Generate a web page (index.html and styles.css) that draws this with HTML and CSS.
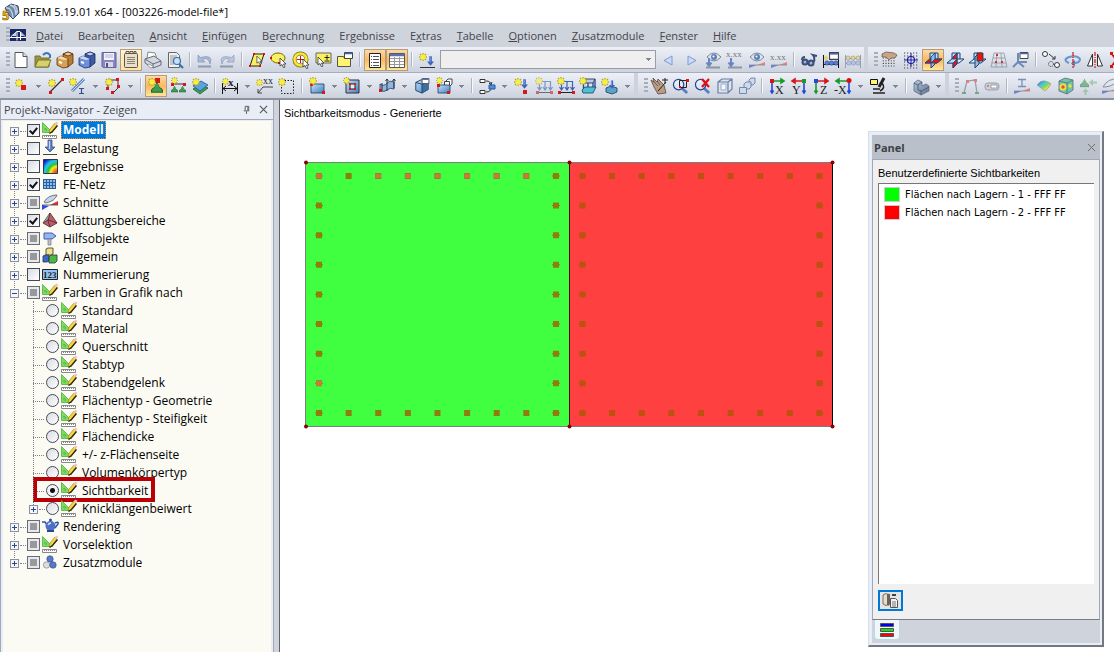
FILE: index.html
```html
<!DOCTYPE html>
<html lang="de">
<head>
    <meta charset="UTF-8">
    <meta name="viewport" content="width=device-width, initial-scale=1.0">
    <title>RFEM 5.19.01 x64 - [003226-model-file*]</title>
    <link rel="stylesheet" href="styles.css">
</head>
<body>
    <svg class="sprite" aria-hidden="true">
        <defs>
            <linearGradient id="g-blue" x1="0" y1="0" x2="1" y2="1"><stop offset="0" stop-color="#c4e2fa"/><stop offset="1" stop-color="#3f7fc0"/></linearGradient>
            <linearGradient id="g-steel" x1="0" y1="0" x2="1" y2="1"><stop offset="0" stop-color="#b9cbdc"/><stop offset="1" stop-color="#5c7088"/></linearGradient>
            <linearGradient id="g-rain" x1="0" y1="0" x2="1" y2="1"><stop offset="0" stop-color="#4058d8"/><stop offset=".35" stop-color="#40c8e0"/><stop offset=".55" stop-color="#80d860"/><stop offset=".75" stop-color="#f0e040"/><stop offset="1" stop-color="#e05040"/></linearGradient>
            <radialGradient id="g-res" cx="1" cy="1" r="1.25"><stop offset="0" stop-color="#e02010"/><stop offset=".25" stop-color="#f09010"/><stop offset=".4" stop-color="#f8f020"/><stop offset=".55" stop-color="#30c030"/><stop offset=".75" stop-color="#20c8f0"/><stop offset="1" stop-color="#1020c8"/></radialGradient>
        </defs>
        <!-- shared parts -->
        <symbol id="star" viewBox="0 0 8 8"><path d="M4 0v8M0 4h8M1 1l6 6M7 1L1 7" stroke="#b8a820" stroke-width="1.400"/><path d="M4 1v6M1 4h6M2 2l4 4M6 2L2 6" stroke="#f8f040" stroke-width="1.300"/></symbol>
        <symbol id="cursor" viewBox="0 0 8 10"><path d="M1 0l6 6H4.500l1.500 3-1.500.800L3 6.500 1 8z" fill="#fff" stroke="#333" stroke-width=".8"/></symbol>
        <symbol id="wedge" viewBox="0 0 18 6"><path d="M1 3v3l8-3z" fill="#6a80dc"/><path d="M9 3l8-3v3z" fill="#e88080"/><path d="M1 3h16" stroke="#888" stroke-width=".8"/></symbol>
        <symbol id="eye" viewBox="0 0 14 10"><path d="M0 5q7-8 14 0-7 8-14 0z" fill="#dfe6f0" stroke="#7b8695"/><circle cx="7" cy="5" r="3" fill="#5d82b8"/><circle cx="6.500" cy="4.500" r="1" fill="#fff"/></symbol>
        <symbol id="lens" viewBox="0 0 18 18"><path d="M11 11l5 5" stroke="#5a7fc4" stroke-width="3"/><circle cx="7" cy="7" r="5.500" fill="#dce9fb" stroke="#2f448c" stroke-width="1.300"/><path d="M4 6q1-3 4-3" stroke="#fff" fill="none"/></symbol>
        <symbol id="win" viewBox="0 0 9 7"><path d="M.5.5h8v6h-8z" fill="#fff" stroke="#444"/><path d="M1 1.500h7" stroke="#4c63a8" stroke-width="1.500"/></symbol>
        <symbol id="darrow" viewBox="0 0 8 11"><path d="M2.500 0h3v6H8l-4 5-4-5h2.500z" fill="#3c5fc0"/><path d="M3.500 0v7" stroke="#9bb4ec"/></symbol>
        <symbol id="support" viewBox="0 0 10 9"><path d="M0 8q0-3 3-4 2-1 2-4 0 3 2 4 3 1 3 4z" fill="#3f9c50" stroke="#1d5c2c" stroke-width=".8"/><circle cx="5" cy="3" r="2" fill="#3f9c50"/></symbol>
        <symbol id="plane" viewBox="0 0 20 20"><path d="M7 3h8v8H7z" fill="#bcdcf6" stroke="#16477e"/><path d="M2 13l5-4h12l-5 4z" fill="#dcecfa" stroke="#16477e"/><path d="M8 7l4-4v11l-4 4z" fill="#8fbce4" stroke="#16477e"/></symbol>
        <symbol id="dots" viewBox="0 0 18 12"><path d="M2 1h15M2 4h15M2 7h15M2 10h15" stroke="#444" stroke-width="1.200" stroke-dasharray="1.200 1.800"/></symbol>
        <symbol id="box" viewBox="0 0 18 18"><path d="M2 5l6-3 8 2v9l-7 4-7-3z" fill="url(#g-blue)" stroke="#1e3a5c"/><path d="M9 7l7-3v9l-7 4z" fill="#3d6ea4"/><path d="M2 5l7 2v10M9 7l7-3" fill="none" stroke="#1e3a5c"/></symbol>
        <!-- application -->
        <symbol id="i-app" viewBox="0 0 18 18"><path d="M3 5l6-4 7 2 1 7-6 6-4-4z" fill="#6f8aa8" stroke="#33475f"/><path d="M4 5q6-1 7 10M8 2q6 1 6 10M12 2q4 3 3 8" fill="none" stroke="#c5d5e6" stroke-width="1.300"/><text x="0" y="17" font-size="13" font-weight="bold" fill="#f7c52c" stroke="#7a5200" stroke-width=".6">5</text></symbol>
        <symbol id="i-bridge" viewBox="0 0 16 12"><path d="M0 0h16v12H0z" fill="#1b2a66"/><path d="M0 8.500h16M1 7.500l6-5v9M7 2.500h3l5 5M10.500 3v8" fill="none" stroke="#fff"/><path d="M2 7l4-4v4zM11 4l3 3h-3z" fill="#c8cfe4"/></symbol>
        <!-- standard toolbar -->
        <symbol id="i-new" viewBox="0 0 20 20"><path d="M4 2.500h8l4 4v11H4z" fill="#fff" stroke="#555"/><path d="M12 2.500v4h4" fill="#dde3ec" stroke="#555"/></symbol>
        <symbol id="i-open" viewBox="0 0 20 20"><path d="M2 17V6h5l1 2h8v9z" fill="#9a9540" stroke="#77742c"/><path d="M2 17l3-7h13l-3 7z" fill="#d8d070" stroke="#77742c"/><path d="M10 5q4-4 7 0v3" fill="none" stroke="#3e76b4" stroke-width="2"/></symbol>
        <symbol id="i-cab" viewBox="0 0 20 20"><path d="M8 4l5-2 5 2v9l-5 4-5-2z" fill="#b87c34" stroke="#50300c" stroke-width=".8"/><path d="M8 4l5 2 5-2-5-2z" fill="#f0cf94" stroke="#50300c" stroke-width=".8"/><path d="M2 8l4-2 7 3v8l-5 1-6-3z" fill="#d99f52" stroke="#50300c" stroke-width=".8"/><path d="M2 8l4-2 7 3-4 1z" fill="#f4dbaa"/><path d="M4 12l3 1" stroke="#fff" stroke-width="2"/></symbol>
        <symbol id="i-cabblue" viewBox="0 0 20 20"><path d="M8 4l5-2 5 2v9l-5 4-5-2z" fill="#3d5ba4" stroke="#182b5c" stroke-width=".8"/><path d="M8 4l5 2 5-2-5-2z" fill="#bccff4" stroke="#182b5c" stroke-width=".8"/><path d="M2 8l4-2 7 3v8l-5 1-6-3z" fill="#6c90dc" stroke="#182b5c" stroke-width=".8"/><path d="M2 8l4-2 7 3-4 1z" fill="#c8d8f8"/><path d="M4 12l3 1" stroke="#fff" stroke-width="2"/></symbol>
        <symbol id="i-save" viewBox="0 0 20 20"><path d="M3 2.500h14v15H4l-1-1z" fill="#8a86c4" stroke="#65629c"/><path d="M5 3h10v7H5z" fill="#f2f2fa"/><path d="M6 5h8M6 7h8" stroke="#b4b4cc"/><path d="M6 12h8v5H6z" fill="#d8d8e4"/><path d="M7 13h2v4H7z" fill="#54507c"/></symbol>
        <symbol id="i-note" viewBox="0 0 20 20"><rect x="3.500" y="3.500" width="13" height="14" rx="1" fill="#e9dfcb" stroke="#5d5547"/><path d="M6 7.500h8M6 9.500h8M6 11.500h8M6 13.500h8" stroke="#8b8170"/><path d="M5 4V1.500h3V4M9 4V1.500h3V4M13 4V1.500h2V4" fill="none" stroke="#5d5547"/></symbol>
        <symbol id="i-print" viewBox="0 0 20 20"><path d="M4 9l1-7 7 1 2 6z" fill="#fff" stroke="#888"/><path d="M2 9l9-3 7 5v4l-8 3-8-5z" fill="#d4d7e0" stroke="#656b7b"/><path d="M2 9l8 5 8-3M10 14v4" fill="none" stroke="#656b7b"/><path d="M6 14l5 3-3 1-4-3z" fill="#fff" stroke="#777" stroke-width=".7"/></symbol>
        <symbol id="i-preview" viewBox="0 0 20 20"><path d="M3.500 2.500h8l3 3v12h-11z" fill="#eef0f4" stroke="#666"/><path d="M5 6h7M5 8h7M5 10h5M5 12h4M5 14h4" stroke="#999"/><path d="M14 14l4 4" stroke="#3d6fa8" stroke-width="2.200"/><circle cx="12" cy="11" r="3.500" fill="#c4e0f8" stroke="#3d6fa8" stroke-width="1.200"/></symbol>
        <symbol id="i-undo" viewBox="0 0 20 20"><path d="M3 5v7h7L7.500 9.500Q13 6 15 14q4-10-9.500-6.500z" fill="#a9bad6" stroke="#8c9cbb" stroke-width=".8"/><path d="M3 16.500h13" stroke="#8c98ae" stroke-width="2"/></symbol>
        <symbol id="i-redo" viewBox="0 0 20 20"><path d="M17 5v7h-7l2.500-2.500Q7 6 5 14 1 4 14.500 7.500z" fill="#b9c6dc" stroke="#95a3be" stroke-width=".8"/><path d="M3 16.500h13" stroke="#8c98ae" stroke-width="2"/></symbol>
        <symbol id="i-sel" viewBox="0 0 20 20"><path d="M7 4h10l-4 12H3z" fill="#f8f060" stroke="#222"/><path d="M6 3h2v2H6zM16 3h2v2h-2zM2 15h2v2H2zM12 15h2v2h-2z" fill="#e01010"/><use href="#cursor" x="9" y="6" width="7" height="9"/></symbol>
        <symbol id="i-lasso" viewBox="0 0 20 20"><ellipse cx="9" cy="8" rx="7" ry="5" fill="#f8f060" stroke="#7a6a00"/><path d="M1 7h2v2H1zM9 12h2v2H9z" fill="#e01010"/><use href="#cursor" x="10" y="8" width="8" height="10"/></symbol>
        <symbol id="i-ring" viewBox="0 0 20 20"><circle cx="9.500" cy="9.500" r="6" fill="#fff" stroke="#7a6a00" stroke-width="4"/><circle cx="9.500" cy="9.500" r="6" fill="none" stroke="#f6e53a" stroke-width="2.600"/><path d="M9.500 6v7M6 9.500h7" stroke="#d01010"/><use href="#cursor" x="11" y="9" width="8" height="10"/></symbol>
        <symbol id="i-plus" viewBox="0 0 20 20"><path d="M3 3h15v10H3z" fill="#f8f060" stroke="#666"/><path d="M14 5v5M11.500 7.500h5M11.500 11h5" stroke="#222"/><use href="#cursor" x="4" y="7" width="8" height="10"/></symbol>
        <symbol id="i-folderwin" viewBox="0 0 20 20"><path d="M2.500 6.500h6l1 2h6v8h-13z" fill="#fff46c" stroke="#555"/><use href="#win" x="9" y="2" width="9" height="7"/></symbol>
        <symbol id="i-list" viewBox="0 0 20 20"><path d="M4.500 3.500h11v14h-11z" fill="#fff" stroke="#222"/><path d="M6 6.500h1M6 9.500h1M6 12.500h1M6 15.500h1M8 6.500h6M8 9.500h6M8 12.500h6M8 15.500h6" stroke="#555"/></symbol>
        <symbol id="i-table" viewBox="0 0 20 20"><path d="M2.500 3.500h15v14h-15z" fill="#fff" stroke="#555"/><path d="M3 5h14" stroke="#5a70b0" stroke-width="2.500"/><path d="M3 8.500h14M3 11.500h14M3 14.500h14M7.500 7v10M12.500 7v10" stroke="#999"/></symbol>
        <symbol id="i-load" viewBox="0 0 20 20"><use href="#star" x="2" y="3" width="8" height="8"/><use href="#darrow" x="10" y="6" width="7" height="10"/><path d="M3 17.500h15" stroke="#333"/></symbol>
        <symbol id="i-prev" viewBox="0 0 20 20"><path d="M13 6v9l-8-4.500z" fill="#c9dafa" stroke="#7f9bd4"/></symbol>
        <symbol id="i-next" viewBox="0 0 20 20"><path d="M7 6v9l8-4.500z" fill="#c9dafa" stroke="#7f9bd4"/></symbol>
        <symbol id="i-eyeload" viewBox="0 0 20 20"><use href="#eye" x="4" y="2" width="14" height="10"/><path d="M6 8v8M3.500 12.500L6 16l2.500-3.500" stroke="#6a84c4" stroke-width="2" fill="none"/><path d="M3 17.500h14" stroke="#8e96a4" stroke-width="2"/></symbol>
        <symbol id="i-xxload" viewBox="0 0 20 20"><text class="glyph" x="1" y="7" font-size="9">x.xx</text><path d="M6 8v8M3.500 12.500L6 16l2.500-3.500" stroke="#6a84c4" stroke-width="2" fill="none"/><path d="M3 17.500h14" stroke="#8e96a4" stroke-width="2"/></symbol>
        <symbol id="i-eyewedge" viewBox="0 0 20 20"><use href="#eye" x="3" y="2" width="14" height="10"/><use href="#wedge" x="1" y="12" width="18" height="6"/></symbol>
        <symbol id="i-xxwedge" viewBox="0 0 20 20"><text class="glyph" x="1" y="10" font-size="9">x.xx</text><use href="#wedge" x="1" y="12" width="18" height="6"/></symbol>
        <symbol id="i-glasses" viewBox="0 0 20 20"><circle cx="6" cy="12" r="2.500" fill="#9bb4dc" stroke="#3b4c78" stroke-width="2"/><circle cx="12" cy="13" r="2.500" fill="#9bb4dc" stroke="#3b4c78" stroke-width="2"/><path d="M3 10Q3 7 6 7M15 12q1-5-1-7l4 1" fill="none" stroke="#3b4c78" stroke-width="2"/></symbol>
        <symbol id="i-beamwin" viewBox="0 0 20 20"><path d="M2.500 5v13M17.500 5v13M2 14.500h16" stroke="#111"/><circle cx="5" cy="8" r="2" fill="#e8d070"/><g fill="#5a80dc" stroke="#2c4480" stroke-width=".6"><circle cx="6" cy="13" r="2.200"/><circle cx="10.500" cy="13" r="2.200"/><circle cx="15" cy="13" r="2.200"/></g><use href="#win" x="8" y="2" width="10" height="8"/></symbol>
        <symbol id="i-abacus" viewBox="0 0 20 20"><path d="M2.500 5v13M17.500 5v13M2 8.500h16M2 13.500h16" stroke="#9a9fac"/><g fill="#e0d8ac" stroke="#99916c" stroke-width=".6"><circle cx="5" cy="8" r="2"/><circle cx="10" cy="8" r="2"/><circle cx="15" cy="8" r="2"/></g><g fill="#b8c4e4" stroke="#8792b4" stroke-width=".6"><circle cx="6" cy="13" r="2.200"/><circle cx="10.500" cy="13" r="2.200"/><circle cx="15" cy="13" r="2.200"/></g></symbol>
        <symbol id="i-handgrid" viewBox="0 0 20 20"><use href="#dots" x="2" y="7" width="16" height="11"/><path d="M3 4l4-2 8 1 3 2-2 3h-4l-2 2-3-3H3z" fill="#c8a488" stroke="#6f5a4b" stroke-width=".8"/></symbol>
        <symbol id="i-snap" viewBox="0 0 20 20"><path d="M3 3h15M3 6h15M3 9h15M3 12h15M3 15h15M3 18h15" stroke="#444" stroke-width="1.200" stroke-dasharray="1.200 1.800"/><circle cx="10" cy="10" r="3.500" fill="#e4e9f2" stroke="#1a1a9c" stroke-width="1.200"/><path d="M10 3v14M3 10h14" stroke="#1a1a9c"/></symbol>
        <symbol id="i-wp1" viewBox="0 0 20 20"><use href="#plane" width="20" height="20"/><path d="M2 13l5-4h12l-5 4z" fill="#e01818" stroke="#16477e" stroke-width=".8"/><path d="M8 7l4-4v6l-4 4z" fill="#8fbce4" stroke="#16477e" stroke-width=".8"/></symbol>
        <symbol id="i-wp2" viewBox="0 0 20 20"><use href="#plane" width="20" height="20"/><path d="M8 7l4-4v11l-4 4z" fill="#e01818" stroke="#16477e" stroke-width=".8"/><path d="M2 13l5-4h5l-4 4z" fill="#bcdcf6" stroke="#16477e" stroke-width=".8"/></symbol>
        <symbol id="i-wp3" viewBox="0 0 20 20"><use href="#plane" width="20" height="20"/><path d="M10 3h6v8h-6z" fill="#e01818" stroke="#333" stroke-width=".8"/></symbol>
        <symbol id="i-mesh" viewBox="0 0 20 20"><path d="M5 3h10l3 14H2zM4 8h12M3 13h14M8 3L7 17M12 3l1 14" fill="none" stroke="#8e97a4" stroke-width=".8"/><path d="M7 4h2v2H7zM6 11h2v2H6zM12 11h2v2h-2z" fill="#d83030"/></symbol>
        <symbol id="i-axeswin" viewBox="0 0 20 20"><path d="M7 3v9h9M7 12l-5 5" fill="none" stroke="#6f8bb8" stroke-width="2"/><path d="M7 12l6 5" stroke="#6f8bb8" stroke-width="2"/><use href="#win" x="8" y="2" width="10" height="7"/></symbol>
        <symbol id="i-copy" viewBox="0 0 20 20"><circle cx="4" cy="4" r="2.500" fill="#fff" stroke="#333"/><circle cx="10" cy="14" r="2.500" fill="none" stroke="#333" stroke-dasharray="1 1"/><circle cx="16" cy="15" r="2.500" fill="#fff" stroke="#333"/><path d="M8 4l6 5M14 6v3h-3" fill="none" stroke="#333"/></symbol>
        <symbol id="i-rotate" viewBox="0 0 20 20"><path d="M6 13Q-1 10 6 7q8-2 11 2 0 4-6 4" fill="none" stroke="#6a94cc" stroke-width="2"/><path d="M12 10v7l-4-3.500z" fill="#5a84bc"/><path d="M10 2v16" stroke="#e01010" stroke-width="1.200" stroke-dasharray="4 1 1 1"/></symbol>
        <symbol id="i-mirror" viewBox="0 0 20 20"><path d="M7.500 4v12h-5zM12.500 4v12h5z" fill="#fff" stroke="#333"/><path d="M10 2v16" stroke="#e01010" stroke-width="1.200" stroke-dasharray="4 1 1 1"/></symbol>
        <symbol id="i-cut" viewBox="0 0 20 20"><path d="M5 4l6 6-6 6" fill="none" stroke="#222"/><path d="M4 3l5 7-5 7" fill="none" stroke="#e01010" stroke-width="1.500"/><path d="M3 2h3v3H3zM3 15h3v3H3z" fill="#e01010"/></symbol>
        <!-- model toolbar -->
        <symbol id="i-node" viewBox="0 0 20 20"><use href="#star" x="4" y="3" width="8" height="8"/><path d="M10 9h5v5h-5z" fill="#d81818"/></symbol>
        <symbol id="i-line" viewBox="0 0 20 20"><path d="M4 16L16 4" stroke="#333" stroke-width="1.200"/><path d="M3 15h3v3H3zM15 2h3v3h-3z" fill="#d81818"/><use href="#star" x="2" y="3" width="8" height="8"/></symbol>
        <symbol id="i-member" viewBox="0 0 20 20"><path d="M4 15L16 3" stroke="#5a84bc" stroke-width="3"/><path d="M4 15L16 3" stroke="#cfe0f5"/><use href="#star" x="1" y="2" width="8" height="8"/><path d="M11 12.500h5M11 17.500h5M13.500 12v6" stroke="#33508c" stroke-width="1.200"/></symbol>
        <symbol id="i-poly" viewBox="0 0 20 20"><path d="M5 12V4h10v8l-5 5" fill="none" stroke="#333"/><path d="M3 11h3v3H3zM13 2h3v3h-3zM14 9h3v3h-3zM8 15h3v3H8z" fill="#d81818"/><use href="#star" x="2" y="2" width="8" height="8"/></symbol>
        <symbol id="i-sup" viewBox="0 0 20 20"><path d="M9 2h5v5H9z" fill="#d81818"/><use href="#support" x="5" y="6" width="12" height="12"/><use href="#star" x="2" y="2" width="8" height="8"/></symbol>
        <symbol id="i-sup2" viewBox="0 0 20 20"><path d="M3 8h15" stroke="#333"/><path d="M3 7h3v3H3zM15 7h3v3h-3z" fill="#d81818"/><use href="#support" x="3" y="10" width="7" height="7"/><use href="#support" x="11" y="10" width="7" height="7"/><use href="#star" x="3" y="1" width="7" height="7"/></symbol>
        <symbol id="i-supsurf" viewBox="0 0 20 20"><path d="M3 13l8-5 7 4-8 6z" fill="#3f9c50" stroke="#1d5c2c" stroke-width=".8"/><path d="M3 10l8-5 7 4-8 6z" fill="#5ba3e0" stroke="#1e5a94" stroke-width=".8"/><use href="#star" x="2" y="2" width="8" height="8"/></symbol>
        <symbol id="i-dim" viewBox="0 0 20 20"><path d="M2.500 7v11M17.500 7v11M3 12.500h14M6 10l-3 2.500L6 15M14 10l3 2.500-3 2.500" fill="none" stroke="#111"/><text class="glyph dark" x="8" y="10" font-size="11" font-weight="bold">x</text><use href="#star" x="2" y="2" width="7" height="7"/></symbol>
        <symbol id="i-xx" viewBox="0 0 20 20"><text class="glyph dark" x="8" y="8" font-size="10">xx</text><path d="M3 17l5-6h10M3 13v4h4" fill="none" stroke="#444"/><use href="#star" x="1" y="3" width="7" height="7"/></symbol>
        <symbol id="i-area" viewBox="0 0 20 20"><path d="M4.500 4.500h12v13h-12z" fill="none" stroke="#222" stroke-dasharray="1.500 1.500"/><use href="#star" x="1" y="2" width="8" height="8"/></symbol>
        <symbol id="i-surf" viewBox="0 0 20 20"><path d="M4 8h13v9H4z" fill="url(#g-blue)" stroke="#1e3a5c" stroke-width=".8"/><path d="M15 15h3v3h-3zM3 7h3v3H3z" fill="#d81818"/><use href="#star" x="2" y="1" width="8" height="8"/></symbol>
        <symbol id="i-opening" viewBox="0 0 20 20"><path d="M4 4h13v13H4z" fill="url(#g-blue)" stroke="#333"/><path d="M8 8h5v5H8z" fill="#e8ecf2" stroke="#222"/><path d="M7 7h2v2H7zM12 7h2v2h-2zM7 12h2v2H7zM12 12h2v2h-2z" fill="#d81818"/><use href="#star" x="1" y="1" width="7" height="7"/></symbol>
        <symbol id="i-curved" viewBox="0 0 20 20"><path d="M3 8q4 3 7-1 3-3 7-1v7q-4-2-7 1-3 3-7 0z" fill="#8db8e4" stroke="#1e3a5c" stroke-width=".8"/><path d="M10 3v12M17 3v9M5 7v8" stroke="#333"/><path d="M8.500 5L10 3l1.500 2M15.500 5L17 3l1.500 2" stroke="#333" fill="none"/><path d="M2 13h3v3H2z" fill="#d81818"/></symbol>
        <symbol id="i-solid" viewBox="0 0 20 20"><use href="#box" x="2" y="2" width="16" height="16"/><use href="#win" x="9" y="2" width="9" height="6"/></symbol>
        <symbol id="i-stack" viewBox="0 0 20 20"><path d="M12 5l2-2h4v5l-2 2" fill="#fff" stroke="#444"/><path d="M10.500 5.500h5v5h-5z" fill="#fff" stroke="#444"/><path d="M4 9h12v8H4z" fill="url(#g-blue)" stroke="#1e3a5c" stroke-width=".8"/><path d="M3 8h3v3H3zM13 15h3v3h-3z" fill="#d81818"/><use href="#star" x="2" y="1" width="7" height="7"/></symbol>
        <symbol id="i-conn" viewBox="0 0 20 20"><path d="M3 3.500h5v3H3zM3 14.500h5v3H3z" fill="#fff" stroke="#333"/><path d="M9 5q5 0 5 4M9 16q5 0 5-4M12 7l2 2 1-3" fill="none" stroke="#333"/><path d="M12 9h6v4h-6z" fill="#4a90e0" stroke="#245a9c"/></symbol>
        <symbol id="i-nodeload" viewBox="0 0 20 20"><use href="#darrow" x="9" y="3" width="7" height="10"/><path d="M11 14h4v4h-4z" fill="#d81818"/><use href="#star" x="2" y="2" width="8" height="8"/></symbol>
        <symbol id="i-lineload" viewBox="0 0 20 20"><path d="M5 5.500h12M5.500 5v8M11 5v8M16.500 5v8M3.500 11l2 3 2-3M9 11l2 3 2-3M14.500 11l2 3 2-3" fill="none" stroke="#3a64b4" stroke-width="1.200"/><path d="M3 16.500h14" stroke="#222"/><path d="M2 15h3v3H2zM16 15h3v3h-3z" fill="#d81818"/><use href="#star" x="1" y="1" width="8" height="8"/></symbol>
        <symbol id="i-surfload" viewBox="0 0 20 20"><path d="M6 3h11l-2 4H5z" fill="#b8ccec" stroke="#222" stroke-width=".8"/><path d="M5.500 7v7M10 7v7M15 7v7M17 3v8" stroke="#24468c" stroke-width="1.300"/><path d="M4 14l3-3h11l-3 6H5z" fill="#48c4d8" stroke="#1e3a5c" stroke-width=".8"/><use href="#star" x="1" y="1" width="8" height="8"/></symbol>
        <symbol id="i-freeload" viewBox="0 0 20 20"><path d="M6 12l5-2 6 2v4l-5 2-6-2z" fill="#5ba3c8" stroke="#1e3a5c" stroke-width=".8"/><use href="#darrow" x="9" y="4" width="6" height="9"/><use href="#star" x="1" y="2" width="8" height="8"/></symbol>
        <symbol id="i-pan" viewBox="0 0 20 20"><path d="M2 4l3 2-1-4 4 4 1-3 6 6 2 8-8 1-4-7z" fill="#b89c86" stroke="#5c4a3e" stroke-width=".8"/><path d="M4 5l5 5M8 5l3 4" stroke="#5c4a3e" stroke-width=".8"/><path d="M9 15l8-9M13 4h6M16 2v6" stroke="#222" fill="none"/></symbol>
        <symbol id="i-zoomwin" viewBox="0 0 20 20"><use href="#lens" x="1" y="2" width="17" height="17"/><path d="M8.500 4.500h7v7h-7z" fill="none" stroke="#222"/><path d="M8 10h2v2H8zM15 3h3v3h-3z" fill="#d81818"/></symbol>
        <symbol id="i-zoomx" viewBox="0 0 20 20"><use href="#lens" x="1" y="2" width="17" height="17"/><path d="M9 3l7 8M16 3l-7 8" stroke="#e01010" stroke-width="2.300"/></symbol>
        <symbol id="i-cube" viewBox="0 0 20 20"><path d="M3 6l4-3h10v10l-4 4H3zM3 6h10v11M13 6l4-3" fill="#dbe4f2" stroke="#6d7fa2" stroke-width="1.200"/><path d="M6 8h5v6H6z" fill="#f3f6fb" stroke="#9dabc8"/></symbol>
        <symbol id="i-stairs" viewBox="0 0 20 20"><g fill="#cdd9ec" stroke="#6d7fa2" stroke-width=".9"><path d="M12 4l2-2h4v5l-2 2h-4z"/><path d="M7 8l2-2h5v5l-2 2H7z"/><path d="M2.500 11.500h7v6h-7z"/></g></symbol>
        <symbol id="i-ax" viewBox="0 0 20 20"><path d="M4 5h12M14 3l3 2-3 2z" stroke="#189c28" fill="#189c28" stroke-width="1.600"/><path d="M5 5v12M3.500 14.500L5 17l1.500-2.500" stroke="#2448d8" stroke-width="1.600" fill="none"/><path d="M3 3h4v4H3z" fill="#e01010"/><text class="glyph dark" x="8" y="18" font-size="12">X</text></symbol>
        <symbol id="i-ay" viewBox="0 0 20 20"><path d="M4 5h12M6 3L3 5l3 2z" stroke="#d81818" fill="#d81818" stroke-width="1.600"/><path d="M15 5v12M13.500 14.500L15 17l1.500-2.500" stroke="#2448d8" stroke-width="1.600" fill="none"/><path d="M13 3h4v4h-4z" fill="#189c28"/><text class="glyph dark" x="3" y="18" font-size="12">Y</text></symbol>
        <symbol id="i-az" viewBox="0 0 20 20"><path d="M4 5h12M14 3l3 2-3 2z" stroke="#d81818" fill="#d81818" stroke-width="1.600"/><path d="M5 5v12M3.500 14.500L5 17l1.500-2.500" stroke="#189c28" stroke-width="1.600" fill="none"/><path d="M3 3h4v4H3z" fill="#2448d8"/><text class="glyph dark" x="9" y="18" font-size="12">Z</text></symbol>
        <symbol id="i-amx" viewBox="0 0 20 20"><path d="M4 5h12M6 3L3 5l3 2z" stroke="#189c28" fill="#189c28" stroke-width="1.600"/><path d="M16 5v12M14.500 14.500L16 17l1.500-2.500" stroke="#2448d8" stroke-width="1.600" fill="none"/><circle cx="16" cy="4.500" r="2.500" fill="#e01010"/><text class="glyph dark" x="1" y="18" font-size="12">-X</text></symbol>
        <symbol id="i-scope" viewBox="0 0 20 20"><path d="M2.500 3.500h7v5h-7z" fill="#fff46c" stroke="#111"/><path d="M16 2l-5 9" stroke="#222" stroke-width="3"/><path d="M14 7q4 5-2 8M5 13h7M5 17h12" fill="none" stroke="#222" stroke-width="1.600"/></symbol>
        <symbol id="i-lsolid" viewBox="0 0 20 20"><path d="M3 7l4-3 4 2v4l4-2 3 2v5l-8 4-7-4z" fill="url(#g-steel)" stroke="#5d6f88" stroke-width=".8"/><path d="M3 7l4 2v5l4 1 7-4M7 9l4-3M10 15v4" fill="none" stroke="#42546c" stroke-width=".8"/></symbol>
        <symbol id="i-frame" viewBox="0 0 20 20"><path d="M4 17L7 5l8-1 2 13" fill="none" stroke="#9a9fac" stroke-width="1.300"/><path d="M6 4h3v3H6zM14 3h3v3h-3z" fill="#e08080"/><path d="M2 16h4v2H2zM15 16h4v2h-4z" fill="#6cac7c"/></symbol>
        <symbol id="i-usb" viewBox="0 0 20 20"><rect x="3" y="7" width="14" height="7" rx="3" fill="#cdced6" stroke="#9a9fac"/><path d="M9 9h6v3H9z" fill="#fff" stroke="#8a8f9c" stroke-width=".8"/><path d="M6 9v2" stroke="#e08080" stroke-width="2"/></symbol>
        <symbol id="i-iwedge" viewBox="0 0 20 20"><path d="M6 3.500h8M6 10.500h8M10 3v8" stroke="#7d8fb4" stroke-width="1.300"/><use href="#wedge" x="1" y="12" width="18" height="6"/></symbol>
        <symbol id="i-rainsurf" viewBox="0 0 20 20"><path d="M3 9q4-5 8-4 4 1 6 3-3 5-6 7z" fill="url(#g-rain)" stroke="#999" stroke-width=".7"/></symbol>
        <symbol id="i-raincube" viewBox="0 0 20 20"><path d="M3 5l6-3 8 2v10l-6 4-8-3z" fill="#68c8a8" stroke="#667" stroke-width=".8"/><path d="M3 5l8 2v11M11 7l6-3" fill="none" stroke="#667" stroke-width=".8"/><circle cx="7" cy="11" r="3.500" fill="#f0e040"/><circle cx="7" cy="11" r="1.700" fill="#e05040"/><circle cx="14" cy="10" r="1.700" fill="#f0e040"/></symbol>
        <symbol id="i-greenarr" viewBox="0 0 20 20"><use href="#support" x="2" y="3" width="9" height="9"/><path d="M19 5.500h-4V3l-4 3.500 4 3.500V7.500h4zM6.500 19v-3H4l3.500-3.500L11 16H8.500v3z" fill="#7fb88c"/></symbol>
        <symbol id="i-ellwedge" viewBox="0 0 20 20"><path d="M3 11Q8 2 18 3q-3 7-13 8z" fill="#dfe6f0" stroke="#858f9f"/><use href="#wedge" x="1" y="12" width="18" height="6"/></symbol>
        <!-- navigator tree -->
        <symbol id="t-model" viewBox="0 0 18 18"><path d="M.5 1.500l10 10H.5z" fill="#7cdc5c" stroke="#4fb044" stroke-width=".8"/><path d="M3 7l2 2H3z" fill="#fbfbf4" stroke="#3f9c34" stroke-width=".7"/><path d="M7 12l1-4 5-6 2 2-5 7z" fill="#f6d63e" stroke="#8a7420" stroke-width=".6"/><path d="M7.500 12.500l3-2 5-6" fill="none" stroke="#2b240c" stroke-width="1.300"/><path d="M12.500 2.500l2-2 2 1.500-2 2z" fill="#f4c0b8"/><path d="M.5 14.500h14v3H.5z" fill="#fff" stroke="#888"/><path d="M2 15.500h12" stroke="#888" stroke-dasharray="1 1"/></symbol>
        <symbol id="t-load" viewBox="0 0 18 18"><path d="M6 1h4v7h3l-5 5-5-5h3z" fill="#5a7cc4" stroke="#3c5490" stroke-width=".8"/><path d="M7.500 2v8" stroke="#c8d8f4" stroke-width="1.300"/><path d="M1 15.500h14" stroke="#444"/></symbol>
        <symbol id="t-result" viewBox="0 0 18 18"><path d="M1.500 2.500h14v14h-14z" fill="url(#g-res)" stroke="#335"/></symbol>
        <symbol id="t-mesh" viewBox="0 0 18 18"><path d="M1 4h13v10H1z" fill="#8cc0f4"/><path d="M1 4.500h13M1 7.500h13M1 10.500h13M1 13.500h13M1.500 4v10M4.500 4v10M7.500 4v10M10.500 4v10M13.500 4v10" stroke="#2f5c98"/></symbol>
        <symbol id="t-cut" viewBox="0 0 18 18"><path d="M2 9Q6 2 15 2q-2 6-11 8z" fill="#c4d4ec" stroke="#556" stroke-width=".8"/><path d="M0 12v5l7-4z" fill="#3048e8"/><path d="M8 12l8-4v4z" fill="#e03030"/><path d="M0 12h16" stroke="#445" stroke-width=".8"/></symbol>
        <symbol id="t-smooth" viewBox="0 0 18 18"><path d="M8 2l7 10-7 4-7-4z" fill="#c85868" stroke="#3c2c34" stroke-width=".8"/><path d="M8 2L6 10l-5 2z" fill="#8c9c9c"/><path d="M1 12l5-3 9 3M8 2l-2 8 2 6" fill="none" stroke="#3c2c34" stroke-width=".8"/></symbol>
        <symbol id="t-sign" viewBox="0 0 18 18"><path d="M2 4h8l4 3-4 3H2z" fill="#94b4f4" stroke="#3f5ea8"/><path d="M6 10h3v6H6z" fill="#c0c0cc" stroke="#777" stroke-width=".7"/></symbol>
        <symbol id="t-blocks" viewBox="0 0 18 18"><path d="M4 2l2-1h5v6l-2 1H4z" fill="#f0e088" stroke="#333" stroke-width=".8"/><path d="M1 9l2-1h4v6l-2 1H1z" fill="#3868d0" stroke="#333" stroke-width=".8"/><path d="M7 10l2-2h6v6l-2 2H7z" fill="#48b848" stroke="#333" stroke-width=".8"/></symbol>
        <symbol id="t-num" viewBox="0 0 18 18"><path d="M.5 4.500h15v10H.5z" fill="#8fc4f4" stroke="#222"/><text class="glyph dark" x="1" y="13" font-size="9" font-weight="bold">123</text></symbol>
        <symbol id="t-pot" viewBox="0 0 18 18"><path d="M0 5h3l2 3M13 6q4-2 3 1l-3 4" fill="none" stroke="#34509c" stroke-width="1.500"/><ellipse cx="8.500" cy="9" rx="5" ry="5" fill="#4c70c8"/><path d="M5 13h7v2H5z" fill="#2c4488"/><circle cx="8.500" cy="3" r="1.500" fill="#34509c"/><path d="M6 8q1-2 3-2" stroke="#d0e0fc" stroke-width="1.500" fill="none"/></symbol>
        <symbol id="t-mods" viewBox="0 0 18 18"><circle cx="8" cy="6" r="3.200" fill="#5878cc" stroke="#3c5490" stroke-width=".7"/><circle cx="4.500" cy="12" r="3.200" fill="#dcdce4" stroke="#888" stroke-width=".7"/><circle cx="11" cy="12" r="3.200" fill="#5878cc" stroke="#3c5490" stroke-width=".7"/></symbol>
        <symbol id="p-filter" viewBox="0 0 19 15"><path d="M2 2q3-3 6 0v9q-3 3-6 0z" fill="#e4dccb" stroke="#5c5448" stroke-width=".8"/><path d="M6 1q4-1 3 2v8q-1 3-3 1z" fill="#6e6255"/><path d="M11 2h4" stroke="#444" stroke-width="2"/><path d="M9.500 5.500h5l2 2v7h-7z" fill="#f2f2f2" stroke="#555"/><path d="M11 9h4M11 11h4M11 13h4" stroke="#777"/></symbol>
        <symbol id="p-colors" viewBox="0 0 14 14"><g stroke="#555"><path d="M.5.5h13v3H.5z" fill="#0000f0"/><path d="M.5 5.500h13v3H.5z" fill="#10e010"/><path d="M.5 10.500h13v3H.5z" fill="#f00808"/></g></symbol>
    </svg>

    <header class="titlebar">
        <svg class="app-icon"><use href="#i-app"/></svg>
        <h1>RFEM 5.19.01 x64 - [003226-model-file*]</h1>
    </header>

    <nav class="menubar">
        <span class="grip"></span>
        <svg class="menu-logo"><use href="#i-bridge"/></svg>
        <button><u>D</u>atei</button>
        <button>Bearbeite<u>n</u></button>
        <button><u>A</u>nsicht</button>
        <button><u>E</u>infügen</button>
        <button>B<u>e</u>rechnung</button>
        <button>Er<u>g</u>ebnisse</button>
        <button>E<u>x</u>tras</button>
        <button><u>T</u>abelle</button>
        <button><u>O</u>ptionen</button>
        <button><u>Z</u>usatzmodule</button>
        <button><u>F</u>enster</button>
        <button><u>H</u>ilfe</button>
    </nav>

    <div class="toolbars">
        <div class="toolbar">
            <span class="grip"></span>
            <button class="tool" aria-label="Neu"><svg><use href="#i-new"/></svg></button>
            <button class="tool" aria-label="Öffnen"><svg><use href="#i-open"/></svg></button>
            <button class="tool" aria-label="Projektmanager"><svg><use href="#i-cab"/></svg></button>
            <button class="tool" aria-label="Blockmanager"><svg><use href="#i-cabblue"/></svg></button>
            <button class="tool" aria-label="Speichern"><svg><use href="#i-save"/></svg></button>
            <button class="tool active pale" aria-label="Ausdruckprotokoll"><svg><use href="#i-note"/></svg></button>
            <button class="tool" aria-label="Drucken"><svg><use href="#i-print"/></svg></button>
            <button class="tool" aria-label="Vorschau"><svg><use href="#i-preview"/></svg></button>
            <span class="sep"></span>
            <button class="tool" aria-label="Rückgängig"><svg><use href="#i-undo"/></svg></button>
            <button class="tool" aria-label="Wiederherstellen"><svg><use href="#i-redo"/></svg></button>
            <span class="sep"></span>
            <button class="tool" aria-label="Auswahl Raute"><svg><use href="#i-sel"/></svg></button>
            <button class="tool" aria-label="Auswahl Ellipse"><svg><use href="#i-lasso"/></svg></button>
            <button class="tool" aria-label="Auswahl Ring"><svg><use href="#i-ring"/></svg></button>
            <button class="tool" aria-label="Auswahl erweitern"><svg><use href="#i-plus"/></svg></button>
            <button class="tool" aria-label="Spezielle Auswahl"><svg><use href="#i-folderwin"/></svg></button>
            <span class="sep"></span>
            <button class="tool active" aria-label="Navigator"><svg><use href="#i-list"/></svg></button>
            <button class="tool active" aria-label="Tabellen"><svg><use href="#i-table"/></svg></button>
            <span class="sep"></span>
            <button class="tool" aria-label="Neuer Lastfall"><svg><use href="#i-load"/></svg></button>
            <select class="case-select" aria-label="Lastfall"><option></option></select>
            <button class="tool" aria-label="Vorheriger"><svg><use href="#i-prev"/></svg></button>
            <button class="tool" aria-label="Nächster"><svg><use href="#i-next"/></svg></button>
            <button class="tool" aria-label="Lasten zeigen"><svg><use href="#i-eyeload"/></svg></button>
            <button class="tool" aria-label="Lastwerte zeigen"><svg><use href="#i-xxload"/></svg></button>
            <button class="tool" aria-label="Ergebnisse zeigen"><svg><use href="#i-eyewedge"/></svg></button>
            <button class="tool" aria-label="Ergebniswerte zeigen"><svg><use href="#i-xxwedge"/></svg></button>
            <span class="sep"></span>
            <button class="tool" aria-label="Sichtbarkeiten"><svg><use href="#i-glasses"/></svg></button>
            <button class="tool" aria-label="Berechnungsparameter"><svg><use href="#i-beamwin"/></svg></button>
            <button class="tool" aria-label="Alles berechnen"><svg><use href="#i-abacus"/></svg></button>
            <span class="split"></span>
            <span class="grip"></span>
            <button class="tool" aria-label="Raster"><svg><use href="#i-handgrid"/></svg></button>
            <button class="tool" aria-label="Fang"><svg><use href="#i-snap"/></svg></button>
            <button class="tool active" aria-label="Arbeitsebene XY"><svg><use href="#i-wp1"/></svg></button>
            <button class="tool" aria-label="Arbeitsebene YZ"><svg><use href="#i-wp2"/></svg></button>
            <button class="tool" aria-label="Arbeitsebene XZ"><svg><use href="#i-wp3"/></svg></button>
            <button class="tool" aria-label="Linienraster"><svg><use href="#i-mesh"/></svg></button>
            <button class="tool" aria-label="Achsen"><svg><use href="#i-axeswin"/></svg></button>
            <span class="sep"></span>
            <button class="tool" aria-label="Kopieren"><svg><use href="#i-copy"/></svg></button>
            <button class="tool" aria-label="Drehen"><svg><use href="#i-rotate"/></svg></button>
            <button class="tool" aria-label="Spiegeln"><svg><use href="#i-mirror"/></svg></button>
            <button class="tool" aria-label="Trennen"><svg><use href="#i-cut"/></svg></button>
        </div>
        <div class="toolbar">
            <span class="grip"></span>
            <button class="tool" aria-label="Knoten"><svg><use href="#i-node"/></svg></button>
            <button class="drop" aria-label="Mehr"></button>
            <button class="tool" aria-label="Linie"><svg><use href="#i-line"/></svg></button>
            <button class="tool" aria-label="Stab"><svg><use href="#i-member"/></svg></button>
            <button class="drop" aria-label="Mehr"></button>
            <button class="tool" aria-label="Polylinie"><svg><use href="#i-poly"/></svg></button>
            <button class="drop" aria-label="Mehr"></button>
            <span class="sep"></span>
            <button class="tool active" aria-label="Knotenlager"><svg><use href="#i-sup"/></svg></button>
            <button class="tool" aria-label="Linienlager"><svg><use href="#i-sup2"/></svg></button>
            <button class="tool" aria-label="Flächenlager"><svg><use href="#i-supsurf"/></svg></button>
            <span class="sep"></span>
            <button class="tool" aria-label="Bemaßung"><svg><use href="#i-dim"/></svg></button>
            <button class="drop" aria-label="Mehr"></button>
            <button class="tool" aria-label="Kommentar"><svg><use href="#i-xx"/></svg></button>
            <button class="tool" aria-label="Hilfslinie"><svg><use href="#i-area"/></svg></button>
            <span class="sep"></span>
            <button class="tool" aria-label="Fläche"><svg><use href="#i-surf"/></svg></button>
            <button class="drop" aria-label="Mehr"></button>
            <button class="tool" aria-label="Öffnung"><svg><use href="#i-opening"/></svg></button>
            <button class="drop" aria-label="Mehr"></button>
            <button class="tool" aria-label="Gekrümmte Fläche"><svg><use href="#i-curved"/></svg></button>
            <button class="drop" aria-label="Mehr"></button>
            <button class="tool" aria-label="Volumenkörper"><svg><use href="#i-solid"/></svg></button>
            <button class="tool" aria-label="Extrudieren"><svg><use href="#i-stack"/></svg></button>
            <button class="drop" aria-label="Mehr"></button>
            <span class="sep"></span>
            <button class="tool" aria-label="Verbindung"><svg><use href="#i-conn"/></svg></button>
            <button class="drop" aria-label="Mehr"></button>
            <button class="tool" aria-label="Knotenlast"><svg><use href="#i-nodeload"/></svg></button>
            <button class="tool faded" aria-label="Stablast"><svg><use href="#i-lineload"/></svg></button>
            <button class="tool" aria-label="Linienlast"><svg><use href="#i-lineload"/></svg></button>
            <button class="tool" aria-label="Flächenlast"><svg><use href="#i-surfload"/></svg></button>
            <button class="tool" aria-label="Freie Last"><svg><use href="#i-freeload"/></svg></button>
            <button class="drop" aria-label="Mehr"></button>
            <span class="split"></span>
            <span class="grip"></span>
            <button class="tool" aria-label="Verschieben"><svg><use href="#i-pan"/></svg></button>
            <button class="tool" aria-label="Fenster vergrößern"><svg><use href="#i-zoomwin"/></svg></button>
            <button class="tool" aria-label="Zoom aufheben"><svg><use href="#i-zoomx"/></svg></button>
            <button class="tool" aria-label="Perspektive"><svg><use href="#i-cube"/></svg></button>
            <button class="tool" aria-label="Isometrie"><svg><use href="#i-stairs"/></svg></button>
            <span class="sep"></span>
            <button class="tool" aria-label="Ansicht X"><svg><use href="#i-ax"/></svg></button>
            <button class="tool" aria-label="Ansicht Y"><svg><use href="#i-ay"/></svg></button>
            <button class="tool" aria-label="Ansicht Z"><svg><use href="#i-az"/></svg></button>
            <button class="tool" aria-label="Ansicht -X"><svg><use href="#i-amx"/></svg></button>
            <button class="drop" aria-label="Mehr"></button>
            <button class="tool" aria-label="Anzeige"><svg><use href="#i-scope"/></svg></button>
            <button class="drop" aria-label="Mehr"></button>
            <span class="sep"></span>
            <button class="tool" aria-label="Rendering"><svg><use href="#i-lsolid"/></svg></button>
            <button class="drop" aria-label="Mehr"></button>
            <span class="split"></span>
            <span class="grip"></span>
            <button class="tool" aria-label="Verformung"><svg><use href="#i-frame"/></svg></button>
            <button class="tool" aria-label="Animation"><svg><use href="#i-usb"/></svg></button>
            <span class="sep"></span>
            <button class="tool" aria-label="Stabergebnisse"><svg><use href="#i-iwedge"/></svg></button>
            <button class="tool" aria-label="Flächenergebnisse"><svg><use href="#i-rainsurf"/></svg></button>
            <button class="tool" aria-label="Volumenergebnisse"><svg><use href="#i-raincube"/></svg></button>
            <button class="tool faded" aria-label="Lagerreaktionen"><svg><use href="#i-greenarr"/></svg></button>
            <button class="tool" aria-label="Schnittergebnisse"><svg><use href="#i-ellwedge"/></svg></button>
        </div>
    </div>

    <main>
        <aside class="navigator">
            <div class="nav-head">
                <h2>Projekt-Navigator - Zeigen</h2>
                <button aria-label="Anheften"><svg viewBox="0 0 10 10"><path d="M2 6.500h6M3.500 6V1.500h4V6M6.500 2v4M5 7v3" fill="none" stroke="#555"/></svg></button>
                <button aria-label="Schließen"><svg viewBox="0 0 10 10"><path d="M1 1l8 8M9 1L1 9" stroke="#555" stroke-width="1.200"/></svg></button>
            </div>
            <ul class="tree">
                <li><button class="expander" aria-label="Aufklappen"></button><label><input type="checkbox" checked><svg><use href="#t-model"/></svg><b class="selected">Modell</b></label></li>
                <li><button class="expander" aria-label="Aufklappen"></button><label><input type="checkbox"><svg><use href="#t-load"/></svg>Belastung</label></li>
                <li><button class="expander" aria-label="Aufklappen"></button><label><input type="checkbox"><svg><use href="#t-result"/></svg>Ergebnisse</label></li>
                <li><button class="expander" aria-label="Aufklappen"></button><label><input type="checkbox" checked><svg><use href="#t-mesh"/></svg>FE-Netz</label></li>
                <li><button class="expander" aria-label="Aufklappen"></button><label><input type="checkbox" class="mixed"><svg><use href="#t-cut"/></svg>Schnitte</label></li>
                <li><button class="expander" aria-label="Aufklappen"></button><label><input type="checkbox" checked><svg><use href="#t-smooth"/></svg>Glättungsbereiche</label></li>
                <li><button class="expander" aria-label="Aufklappen"></button><label><input type="checkbox" class="mixed"><svg><use href="#t-sign"/></svg>Hilfsobjekte</label></li>
                <li><button class="expander" aria-label="Aufklappen"></button><label><input type="checkbox" class="mixed"><svg><use href="#t-blocks"/></svg>Allgemein</label></li>
                <li><button class="expander" aria-label="Aufklappen"></button><label><input type="checkbox"><svg><use href="#t-num"/></svg>Nummerierung</label></li>
                <li><button class="expander open" aria-label="Zuklappen"></button><label><input type="checkbox" class="mixed"><svg><use href="#t-model"/></svg>Farben in Grafik nach</label>
                    <ul class="branch">
                        <li><label><input type="radio" name="color"><svg><use href="#t-model"/></svg>Standard</label></li>
                        <li><label><input type="radio" name="color"><svg><use href="#t-model"/></svg>Material</label></li>
                        <li><label><input type="radio" name="color"><svg><use href="#t-model"/></svg>Querschnitt</label></li>
                        <li><label><input type="radio" name="color"><svg><use href="#t-model"/></svg>Stabtyp</label></li>
                        <li><label><input type="radio" name="color"><svg><use href="#t-model"/></svg>Stabendgelenk</label></li>
                        <li><label><input type="radio" name="color"><svg><use href="#t-model"/></svg>Flächentyp - Geometrie</label></li>
                        <li><label><input type="radio" name="color"><svg><use href="#t-model"/></svg>Flächentyp - Steifigkeit</label></li>
                        <li><label><input type="radio" name="color"><svg><use href="#t-model"/></svg>Flächendicke</label></li>
                        <li><label><input type="radio" name="color"><svg><use href="#t-model"/></svg>+/- z-Flächenseite</label></li>
                        <li><label><input type="radio" name="color"><svg><use href="#t-model"/></svg>Volumenkörpertyp</label></li>
                        <li class="marked"><label><input type="radio" name="color" checked><svg><use href="#t-model"/></svg>Sichtbarkeit</label></li>
                        <li class="parent"><button class="expander" aria-label="Aufklappen"></button><label><input type="radio" name="color"><svg><use href="#t-model"/></svg>Knicklängenbeiwert</label></li>
                    </ul>
                </li>
                <li><button class="expander" aria-label="Aufklappen"></button><label><input type="checkbox" class="mixed"><svg><use href="#t-pot"/></svg>Rendering</label></li>
                <li><button class="expander" aria-label="Aufklappen"></button><label><input type="checkbox" class="mixed"><svg><use href="#t-model"/></svg>Vorselektion</label></li>
                <li><button class="expander" aria-label="Aufklappen"></button><label><input type="checkbox" class="mixed"><svg><use href="#t-mods"/></svg>Zusatzmodule</label></li>
            </ul>
        </aside>

        <section class="viewport">
            <p>Sichtbarkeitsmodus - Generierte</p>
            <svg class="model" viewBox="0 0 532 270" role="img" aria-label="Modell">
                <defs>
                    <!-- one ring of line supports, 9 per side -->
                    <g id="ring" fill="none">
                        <g stroke-width="6" stroke-dasharray="6 23.620">
                            <path d="M13 16h243M13 253h243"/>
                            <path d="M16 42.600v184M253 42.600v184"/>
                        </g>
                        <g stroke-width="8" stroke-dasharray="1 28.620">
                            <path d="M16 15.500v240M253 15.500v240"/>
                        </g>
                    </g>
                </defs>
                <path d="M3 3h263v264H3z" fill="#40ff40"/>
                <path d="M266 3h264v264H266z" fill="#ff4040"/>
                <use href="#ring" stroke="#8f7d10"/>
                <path d="M13 16h6M72.200 16h154M13 223.500h6" fill="none" stroke="#c8793c" stroke-width="5" stroke-dasharray="6 23.620"/>
                <use href="#ring" x="263.500" stroke="#bd5210"/>
                <path d="M2.500 267V2.500H530M2.500 266.500H530" fill="none" stroke="#788078"/>
                <path d="M266.500 3v264" stroke="#401010"/>
                <path d="M529.500 3v264" stroke="#000"/>
                <g fill="#8c0000"><circle cx="3" cy="2.500" r="2"/><circle cx="266.500" cy="2.500" r="2"/><circle cx="529.500" cy="2.500" r="2"/><circle cx="3" cy="266.500" r="2"/><circle cx="266.500" cy="266.500" r="2"/><circle cx="529.500" cy="266.500" r="2"/></g>
            </svg>

            <div class="panel">
                <div class="panel-head">
                    <h2>Panel</h2>
                    <button aria-label="Schließen"><svg viewBox="0 0 10 10"><path d="M1 1l8 8M9 1L1 9" stroke="#666"/></svg></button>
                </div>
                <div class="panel-body">
                    <p>Benutzerdefinierte Sichtbarkeiten</p>
                    <ul class="legend">
                        <li><span class="swatch green"></span>Flächen nach Lagern - 1 - FFF FF</li>
                        <li><span class="swatch red"></span>Flächen nach Lagern - 2 - FFF FF</li>
                    </ul>
                    <button class="filter" aria-label="Filter"><svg><use href="#p-filter"/></svg></button>
                </div>
                <div class="panel-tabs">
                    <button aria-label="Farbskala"><svg><use href="#p-colors"/></svg></button>
                </div>
            </div>
        </section>
    </main>
</body>
</html>
```
FILE: styles.css
```css
* {
    box-sizing: border-box;
}

body {
    margin: 0;
    height: 100vh;
    display: flex;
    flex-direction: column;
    overflow: hidden;
    background-color: #cfd3dc;
    font-family: "Open Sans", "Noto Sans", sans-serif;
    font-size: 11px;
    color: #000;
}

h1, h2, p, ul {
    margin: 0;
    padding: 0;
    font-size: 11px;
    font-weight: normal;
}

ul {
    list-style: none;
}

svg {
    display: block;
    flex: none;
}

button {
    padding: 0;
    border: none;
    background: none;
    font: inherit;
    color: inherit;
}

.sprite {
    position: absolute;
    width: 0;
    height: 0;
}

.glyph {
    font-family: "Liberation Serif", serif;
    fill: #777;
}

.glyph.dark {
    fill: #222;
}

/* title and menu */
.titlebar {
    display: flex;
    align-items: center;
    gap: 3px;
    height: 23px;
    padding-left: 2px;
    background-color: #fff;
}

.app-icon {
    width: 18px;
    height: 18px;
}

.menubar {
    display: flex;
    align-items: center;
    height: 24px;
    gap: 15px;
    background-color: #cfd3dc;
    color: #44444c;
}

.menubar .menu-logo {
    width: 16px;
    height: 12px;
    margin-left: -15px;
    margin-right: -5px;
}

.grip {
    flex: none;
    width: 10px;
    height: 16px;
    background: linear-gradient(#a8adb9, #a8adb9) 4px 1px / 10px 4px repeat-y;
    background: conic-gradient(from 90deg at 2px 2px, transparent 75%, #a8adb9 75%) 4px 0 / 10px 4px repeat-y;
}

/* toolbars */
.toolbars {
    border-bottom: 2px solid #8f929c;
    overflow: hidden;
}

.toolbar {
    display: flex;
    align-items: center;
    height: 26px;
    width: max-content;
    background: linear-gradient(#edf0f7, #ccd2de);
    border-bottom: 1px solid #a8adb9;
}

.toolbar:last-child {
    height: 25px;
    border-bottom: none;
}

.tool {
    flex: none;
    width: 22px;
    height: 22px;
    padding: 1px;
}

.tool svg {
    width: 20px;
    height: 20px;
}

.tool.active {
    padding: 0;
    border: 1px solid #b59c74;
    background: linear-gradient(#fcd9a8, #fbb860 50%, #ffe79a);
}

.tool.pale {
    background: linear-gradient(#fff3d6, #fde3a4);
}

.faded {
    opacity: 0.6;
}

.drop {
    flex: none;
    width: 13px;
    height: 22px;
    background: linear-gradient(#80858f, #80858f) 4px 10px / 5px 1px no-repeat,
        linear-gradient(#80858f, #80858f) 5px 11px / 3px 1px no-repeat,
        linear-gradient(#80858f, #80858f) 6px 12px / 1px 1px no-repeat;
}

.sep {
    flex: none;
    width: 8px;
    height: 15px;
    background: linear-gradient(90deg, #b0b5c0 50%, #f8f9fb 50%) 3px 0 / 2px 100% no-repeat;
}

.split {
    flex: none;
    width: 4px;
    height: 25px;
    background-color: #cdd2dc;
}

.case-select {
    flex: none;
    width: 216px;
    height: 19px;
    margin: 0 2px;
    border: 1px solid #9a9da6;
    appearance: none;
    background: linear-gradient(#80858f, #80858f) 205px 7px / 5px 1px no-repeat,
        linear-gradient(#80858f, #80858f) 206px 8px / 3px 1px no-repeat,
        linear-gradient(#80858f, #80858f) 207px 9px / 1px 1px no-repeat #efefef;
}

main {
    flex: 1;
    display: flex;
    min-height: 0;
}

/* navigator */
.navigator {
    flex: 0 0 274px;
    display: flex;
    flex-direction: column;
    border: 1px solid #a3a8b8;
    border-width: 0 1px 0 1px;
    background-color: #e8edf6;
}

.nav-head {
    display: flex;
    align-items: center;
    gap: 8px;
    height: 20px;
    padding: 0 5px 0 3px;
    border-bottom: 1px solid #a3a8b8;
    color: #44444c;
}

.nav-head h2 {
    flex: 1;
}

.nav-head svg, .panel-head svg {
    width: 9px;
    height: 9px;
}

.tree {
    flex: 1;
    position: relative;
    margin: 1px 2px 0 2px;
    padding-left: 7px;
    background-color: #fbfbf4;
    font-size: 12px;
}

.tree ul {
    font-size: 12px;
}

.tree li {
    position: relative;
    display: flex;
    flex-wrap: wrap;
    align-items: center;
}

/* dotted branch lines */
.tree > li:not(:last-child)::after, .branch::after {
    content: "";
    position: absolute;
    left: 4px;
    top: 14px;
    bottom: -5px;
    border-left: 1px dotted #808080;
}

.tree .branch::after {
    left: 23px;
    top: 0;
    bottom: 12px;
}

.tree label {
    display: flex;
    align-items: center;
    height: 18px;
    white-space: nowrap;
}

.tree label::before {
    content: "";
    width: 6px;
    margin: 2px 1px 0 1px;
    border-top: 1px dotted #808080;
}

.branch {
    position: relative;
    flex: 0 0 100%;
    padding-left: 23px;
}

.branch li:not(.parent) label::before {
    width: 11px;
    margin: 2px 2px 0 0;
}

.branch .parent {
    margin-left: -4px;
}

.tree svg {
    width: 18px;
    height: 18px;
    margin: 0 3px 0 2px;
}

.expander {
    z-index: 1;
    width: 9px;
    height: 9px;
    margin-top: 3px;
    border: 1px solid #8b90a0;
    background: linear-gradient(#2c478c, #2c478c) 1px 3px / 5px 1px no-repeat,
        linear-gradient(#2c478c, #2c478c) 3px 1px / 1px 5px no-repeat #f4f6fa;
}

.expander.open {
    background: linear-gradient(#2c478c, #2c478c) 1px 3px / 5px 1px no-repeat #f4f6fa;
}

.tree input {
    appearance: none;
    width: 13px;
    height: 13px;
    margin: 0;
    border: 1px solid #444a54;
    background: linear-gradient(135deg, #d8dbe4, #fff);
}

.tree input[type="checkbox"]:checked::before {
    content: "";
    display: block;
    width: 3px;
    height: 6px;
    margin: 1px 0 0 3px;
    border: solid #111;
    border-width: 0 2px 2px 0;
    transform: rotate(40deg);
}

.tree .mixed {
    border-color: #666c78;
    background: linear-gradient(#999, #999) 2px 2px / 7px 7px no-repeat #e6e8ee;
}

.tree input[type="radio"] {
    border-radius: 50%;
}

.tree input[type="radio"]:checked {
    background: radial-gradient(circle, #111 2px, #f2f3f6 3px);
}

.selected {
    height: 18px;
    margin-left: -2px;
    padding: 0 2px;
    line-height: 17px;
    background-color: #0078d7;
    color: #fff;
    outline: 1px dotted #f08a30;
    outline-offset: -1px;
}

.marked::before {
    content: "";
    position: absolute;
    left: 0;
    top: -4px;
    width: 114px;
    height: 17px;
    border: 4px solid #b90006;
}

/* graphic window */
.viewport {
    flex: 1;
    position: relative;
    margin-left: 5px;
    border-left: 1px solid #5f6268;
    background-color: #fff;
    font-family: "Liberation Sans", Arial, sans-serif;
}

.viewport p {
    line-height: 13px;
}

.viewport > p {
    padding: 7px 0 0 4px;
}

.model {
    width: 532px;
    height: 270px;
    margin: 40px 0 0 23px;
}

.panel {
    position: absolute;
    top: 31px;
    right: 10px;
    bottom: 5px;
    width: 236px;
    display: flex;
    flex-direction: column;
    padding: 3px 2px 2px 3px;
    background-color: #e8eef8;
    border: 1px solid #d8dde8;
    border-right: 2px solid #75787f;
    border-bottom: 2px solid #75787f;
}

.panel-head {
    display: flex;
    align-items: center;
    justify-content: space-between;
    height: 24px;
    padding: 0 4px 0 2px;
    background-color: #b9c0ca;
    font-family: "Open Sans", "Noto Sans", sans-serif;
    color: #3c4048;
}

.panel-head h2 {
    font-weight: bold;
}

.panel-body {
    flex: 1;
    display: flex;
    flex-direction: column;
    padding: 7px 5px 8px 5px;
    border: 1px solid #a3a8b8;
    border-bottom: 1px solid #777b85;
    background-color: #f0f0f0;
}

.legend {
    flex: 1;
    margin-top: 3px;
    padding: 1px 0 0 5px;
    border-left: 1px solid #777;
    border-top: 1px solid #777;
    background-color: #fff;
    font-family: "DejaVu Sans Condensed", "Noto Sans", sans-serif;
}

.legend li {
    display: flex;
    align-items: center;
    gap: 5px;
    height: 18px;
    white-space: nowrap;
}

.swatch {
    width: 16px;
    height: 15px;
    border: 1px solid #ccc;
}

.swatch.green {
    background-color: #00ff00;
}

.swatch.red {
    background-color: #ff0000;
}

.filter {
    width: 25px;
    height: 21px;
    margin-top: 6px;
    border: 2px solid #0078d7;
    background-color: #e5e5e5;
}

.filter svg {
    width: 19px;
    height: 15px;
    margin: 0 auto;
}

.panel-tabs {
    height: 23px;
    padding: 0 2px;
    background-color: #cfd3dc;
}

.panel-tabs button {
    width: 26px;
    height: 20px;
    padding: 0 5px;
    border: 1px solid #b4dce4;
    border-top: none;
    border-radius: 0 0 4px 4px;
    background-color: #f4f5f8;
}

.panel-tabs svg {
    width: 14px;
    height: 14px;
}
```
